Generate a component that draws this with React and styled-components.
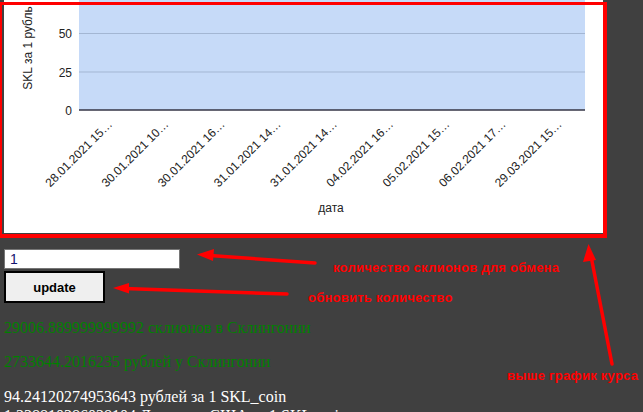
import React from "react";
import styled, { createGlobalStyle } from "styled-components";

const GlobalStyle = createGlobalStyle`
  html, body {
    margin: 0;
    padding: 0;
    background: #404040;
    overflow: hidden;
  }
`;

const Page = styled.div`
  position: relative;
  box-sizing: border-box;
  height: 412px;
  padding: 0 4px;
  overflow: hidden;
  background: #404040;
  font-family: "Liberation Serif", "Times New Roman", serif;
`;

const ChartCard = styled.div`
  width: 599px;
  height: 233px;
  background: #ffffff;
`;

const ChartSvg = styled.svg`
  display: block;
  font-family: "Liberation Sans", Arial, sans-serif;
`;

const Controls = styled.div`
  display: flex;
  flex-direction: column;
  align-items: flex-start;
  gap: 2px;
  margin-top: 16px;
`;

const QtyInput = styled.input`
  box-sizing: border-box;
  width: 176px;
  height: 20px;
  margin: 0;
  padding: 0 5px;
  border: 1px solid #767676;
  background: #ffffff;
  color: #14146e;
  font-family: "Liberation Sans", Arial, sans-serif;
  font-size: 14px;
  outline: none;
`;

const UpdateButton = styled.button`
  box-sizing: border-box;
  width: 101px;
  height: 32px;
  margin: 0;
  padding: 0;
  border: 2px solid #000000;
  background: #efefef;
  color: #000000;
  font-family: "Liberation Sans", Arial, sans-serif;
  font-size: 13px;
  font-weight: bold;
`;

const Stat = styled.p`
  margin: 16px 0;
  font-size: 16px;
  color: ${(p) => p.$color};
`;

const Rates = styled.div`
  color: #ffffff;
  font-size: 16px;
  line-height: 19px;
`;

const Frame = styled.div`
  position: absolute;
  left: 0;
  top: 2px;
  width: 607px;
  height: 236px;
  box-sizing: border-box;
  border: 4px solid #ff0000;
  border-top-width: 3px;
  border-left-width: 2px;
  pointer-events: none;
`;

const Note = styled.div`
  position: absolute;
  left: ${(p) => p.$x}px;
  top: ${(p) => p.$y}px;
  color: #ff0000;
  font-family: "Liberation Sans", Arial, sans-serif;
  font-size: 13px;
  font-weight: bold;
  line-height: 13px;
  letter-spacing: 0.25px;
  white-space: nowrap;
  pointer-events: none;
`;

const ArrowLayer = styled.svg`
  position: absolute;
  left: 0;
  top: 0;
  pointer-events: none;
`;

const xLabels = [
  "28.01.2021 15…",
  "30.01.2021 10…",
  "30.01.2021 16…",
  "31.01.2021 14…",
  "31.01.2021 14…",
  "04.02.2021 16…",
  "05.02.2021 15…",
  "06.02.2021 17…",
  "29.03.2021 15…",
];

const yTicks = [
  { v: "50", y: 33.5 },
  { v: "25", y: 72 },
];

function Chart() {
  return (
    <ChartSvg width="599" height="233" viewBox="4 0 599 233">
      <rect x="79" y="-20" width="506" height="130" fill="#c6daf8" />
      {yTicks.map((t) => (
        <g key={t.v}>
          <line x1="79" x2="585" y1={t.y} y2={t.y} stroke="#a3b6d3" strokeWidth="1" />
          <text x="72" y={t.y + 4.5} textAnchor="end" fontSize="12" fill="#222">
            {t.v}
          </text>
        </g>
      ))}
      <line x1="79" x2="585" y1="110" y2="110" stroke="#343446" strokeWidth="1.6" />
      <text x="72" y="114.5" textAnchor="end" fontSize="12" fill="#222">
        0
      </text>
      <text
        x="32"
        y="48"
        textAnchor="middle"
        fontSize="12"
        fill="#222"
        transform="rotate(-90 32 48)"
      >
        SKL за 1 рубль
      </text>
      {xLabels.map((l, i) => {
        const x = 113 + 56.2 * i;
        const y = 125;
        return (
          <text
            key={i}
            x={x}
            y={y}
            textAnchor="end"
            fontSize="12"
            fill="#222"
            transform={`rotate(-45 ${x} ${y})`}
          >
            {l}
          </text>
        );
      })}
      <text x="331" y="212" textAnchor="middle" fontSize="12" fill="#222">
        дата
      </text>
    </ChartSvg>
  );
}

function Arrows() {
  return (
    <ArrowLayer width="643" height="412" viewBox="0 0 643 412">
      <g stroke="#ff0000" strokeWidth="3.5" strokeLinecap="round" fill="none">
        <line x1="315" y1="263" x2="210" y2="255.5" />
        <line x1="287" y1="294" x2="124" y2="288.5" />
        <line x1="612" y1="364" x2="591" y2="256" />
      </g>
      <g fill="#ff0000">
        <polygon points="197,254.5 214,249 213,261" />
        <polygon points="113,288 129,283 129,293.5" />
        <polygon points="588.5,244 583,262 596,260" />
      </g>
    </ArrowLayer>
  );
}

export default function App() {
  return (
    <>
      <GlobalStyle />
      <Page>
        <ChartCard>
          <Chart />
        </ChartCard>
        <Controls>
          <QtyInput defaultValue="1" />
          <UpdateButton>update</UpdateButton>
        </Controls>
        <Stat $color="#008000">29006.889999999992 склионов в Склингонии</Stat>
        <Stat $color="#008000">2733644.2016235 рублей у Склингонии</Stat>
        <Rates>
          <div>94.24120274953643 рублей за 1 SKL_coin</div>
          <div>1.238810386028104 Долларов США за 1 SKL_coin</div>
        </Rates>
        <Frame />
        <Arrows />
        <Note $x={333} $y={261}>количество склионов для обмена</Note>
        <Note $x={308} $y={291}>обновить количество</Note>
        <Note $x={507} $y={369}>выше график курса</Note>
      </Page>
    </>
  );
}
